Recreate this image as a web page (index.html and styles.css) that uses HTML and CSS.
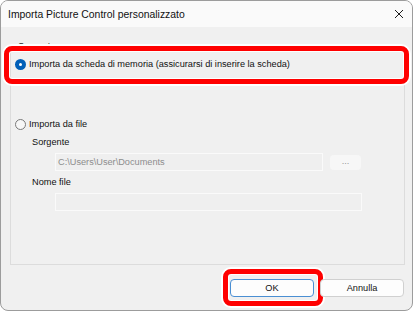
FILE: index.html
```html
<!DOCTYPE html>
<html lang="it">
<head>
    <meta charset="UTF-8">
    <title>Importa Picture Control personalizzato</title>
    <link rel="stylesheet" href="styles.css">
</head>
<body>

    <div class="window">
        <!-- barra del titolo -->
        <div class="titlebar">
            <span class="title">Importa Picture Control personalizzato</span>
            <svg class="close" width="10" height="10" viewBox="0 0 10 10">
                <path d="M1 1 L9 9 M9 1 L1 9" stroke="#1b1b1b" stroke-width="1" fill="none"/>
            </svg>
        </div>

        <div class="dialog-body">
            <div class="group">
                <span class="group-title">Sorgente</span>

                <div class="radio-row">
                    <span class="radio checked"></span>
                    <span>Importa da scheda di memoria (assicurarsi di inserire la scheda)</span>
                    <span class="mark mark-row"></span>
                </div>

                <div class="radio-row second">
                    <span class="radio"></span>
                    <span>Importa da file</span>
                </div>

                <div class="field-label">Sorgente</div>
                <div class="field-row">
                    <div class="textbox">C:\Users\User\Documents</div>
                    <div class="browse">...</div>
                </div>

                <div class="field-label">Nome file</div>
                <div class="field-row">
                    <div class="textbox wide"></div>
                </div>
            </div>

            <div class="buttons">
                <div class="btn default">OK<span class="mark mark-btn"></span></div>
                <div class="btn">Annulla</div>
            </div>
        </div>
    </div>

</body>
</html>
```

FILE: styles.css
```css
body, html {
    margin: 0;
    padding: 0;
    background: #ffffff;
    font-family: "Liberation Sans", Arial, sans-serif;
    font-size: 9.2px;
    color: #111111;
}

/* finestra */
.window {
    width: 411px;
    height: 309px;
    border: 1px solid #9c9c9c;
    border-radius: 8px;
    background: #f0f0f0;
    overflow: hidden;
    display: flex;
    flex-direction: column;
}

.titlebar {
    height: 26px;
    background: #fafafa;
    display: flex;
    align-items: center;
    justify-content: space-between;
    padding: 0 7px 0 7px;
}

.title {
    font-size: 10.4px;
}

.close {
    margin-right: 1px;
}

.dialog-body {
    flex: 1;
    display: flex;
    flex-direction: column;
}

/* gruppo Sorgente */
.group {
    position: relative;
    box-sizing: border-box;
    margin: 19px 7px 0 9px;
    height: 219px;
    border: 1px solid #dcdcdc;
    padding: 10px 4px 0 4px;
}

.group-title {
    position: absolute;
    top: -7px;
    left: 5px;
    padding: 0 2px;
    background: #f0f0f0;
    line-height: 12px;
}

.radio-row {
    position: relative;
    display: flex;
    align-items: center;
    gap: 3px;
    height: 14px;
}

.radio-row.second {
    margin-top: 46px;
}

.radio {
    width: 9px;
    height: 9px;
    border: 1px solid #7a7a7a;
    border-radius: 50%;
    background: #f7f7f7;
    box-sizing: content-box;
}

.radio.checked {
    width: 3px;
    height: 3px;
    border: 4px solid #005fb8;
    background: #ffffff;
}

.field-label {
    margin: 5px 0 0 17px;
    line-height: 12px;
}

.field-row {
    display: flex;
    align-items: center;
    gap: 7px;
    margin: 5px 0 5px 40px;
}

.textbox {
    width: 262px;
    height: 16px;
    border: 1px solid #fafafa;
    background: #efefef;
    color: #8d8d8d;
    padding: 0 2px;
    line-height: 16px;
}

.textbox.wide {
    width: 301px;
}

.browse {
    width: 31px;
    height: 15px;
    border-radius: 4px;
    background: #f7f7f7;
    color: #9a9a9a;
    text-align: center;
    line-height: 13px;
}

/* pulsanti */
.buttons {
    display: flex;
    justify-content: flex-end;
    gap: 6px;
    margin: 14px 8px 0 0;
}

.btn {
    position: relative;
    width: 82px;
    height: 16px;
    border: 1px solid #d0d0d0;
    border-radius: 4px;
    background: #fdfdfd;
    text-align: center;
    line-height: 16px;
}

.btn.default {
    border-color: #4a8fd3;
}

/* riquadri rossi di evidenziazione */
.mark {
    position: absolute;
    border: 5px solid #ff0000;
    border-radius: 8px;
    box-shadow: 0 0 0 2px #ffffff, inset 0 0 0 1px #ffffff;
    pointer-events: none;
}

.mark-row {
    top: -11px;
    bottom: -13px;
    left: -11px;
    right: -9px;
}

.mark-btn {
    top: -11px;
    bottom: -10px;
    left: -8px;
    right: -10px;
}
```
